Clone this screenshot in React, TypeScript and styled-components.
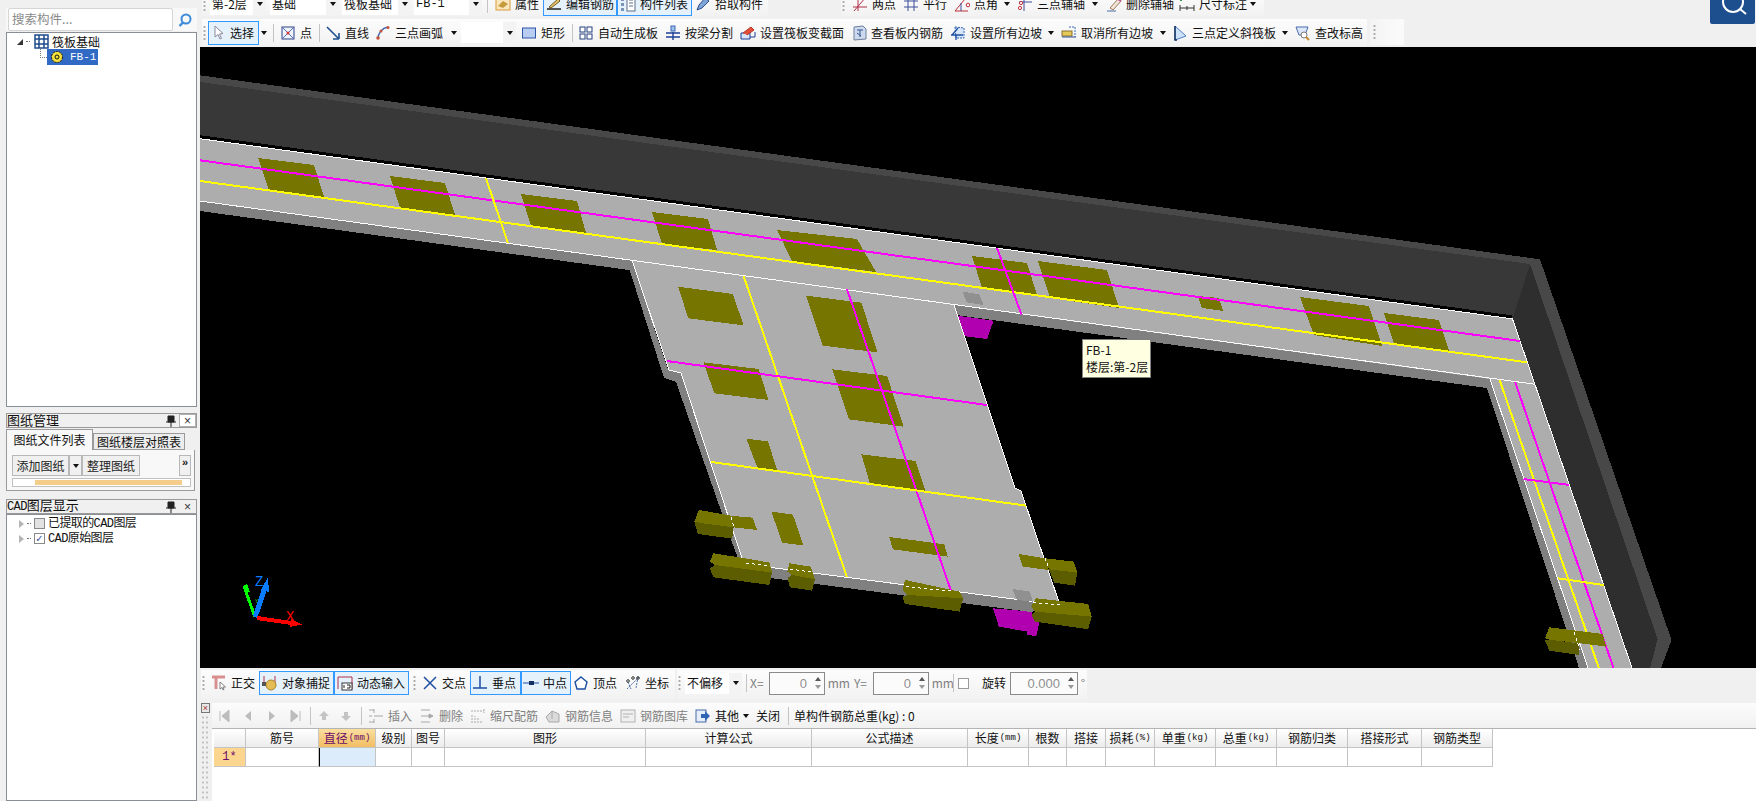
import React from 'react'
import styled, { createGlobalStyle } from 'styled-components'

const GlobalStyle = createGlobalStyle`
  html, body {
    margin: 0;
    padding: 0;
    background: #f0f0f0;
  }
  body {
    font: 12px/16px "Noto Sans CJK SC", "Liberation Sans", sans-serif;
    color: #111;
    overflow: hidden;
  }
`

const icons = {
  select: <path d="M5 1v11l3-2.500 2 4.500 1.500-.7-2-4.300 3.500-.5z" fill="#fff" stroke="#8a8a9a" />,
  point: (
    <>
      <rect x="2" y="2" width="12" height="12" fill="#eef2fb" stroke="#2b3f86" />
      <path d="M3 3l10 10M13 3L3 13" stroke="#5a6db0" />
      <circle cx="8" cy="8" r="1.500" fill="#d33" />
    </>
  ),
  line: <path d="M2 2l11 11M14 14V8M14 14H8" fill="none" stroke="#1f4f8f" strokeWidth="1.600" />,
  arc: (
    <>
      <path d="M3 14C3 8 7 3 13 2" fill="none" stroke="#3c66b0" strokeWidth="1.500" />
      <circle cx="3" cy="13" r="1.800" fill="#c8523a" />
      <circle cx="6" cy="6" r="1.500" fill="#c8523a" />
      <circle cx="13" cy="2.500" r="1.500" fill="#c8523a" />
    </>
  ),
  rect: <rect x="1.500" y="3" width="13" height="10" fill="#b9cdf2" stroke="#2f55a8" />,
  auto: (
    <>
      <rect x="2" y="2" width="5" height="5" fill="#fff" stroke="#24407f" />
      <rect x="9" y="2" width="5" height="5" fill="#fff" stroke="#24407f" />
      <rect x="2" y="9" width="5" height="5" fill="#fff" stroke="#24407f" />
      <rect x="9" y="9" width="5" height="5" fill="#fff" stroke="#24407f" />
    </>
  ),
  split: (
    <>
      <rect x="6" y="1" width="4" height="5" fill="#9ec2ee" stroke="#3c66b0" />
      <path d="M1 8h14M1 12h14M8 7v8" stroke="#1d3f96" strokeWidth="1.400" />
    </>
  ),
  section: (
    <>
      <path d="M1 14V8h9v6z" fill="#d9e6f8" stroke="#1d3f96" />
      <path d="M3 8l8-6 3 3-7 5" fill="#e0503c" stroke="#b9341f" />
      <path d="M15 7v5h-5" fill="none" stroke="#1d3f96" />
    </>
  ),
  inspect: (
    <>
      <path d="M3 2l9-1 3 3v10l-12 1z" fill="#cdd9ee" stroke="#6f7f9e" />
      <path d="M6 5h6M9 5v7M6 8l4 3" stroke="#33578f" />
    </>
  ),
  slope: (
    <>
      <path d="M5 2l9 1v10H6z" fill="#d8e6fa" stroke="#2f65b5" strokeDasharray="2 1" />
      <path d="M2 10l6-7M1 10h12M6 10v5" stroke="#1d4fa3" strokeWidth="1.300" />
    </>
  ),
  unslope: (
    <>
      <path d="M8 2h6v10" fill="none" stroke="#3a6cb8" strokeDasharray="2 1" />
      <rect x="1" y="6" width="10" height="5" fill="#e6c95a" stroke="#85702a" />
      <path d="M1 12h14" stroke="#2f4f8f" />
    </>
  ),
  incline: (
    <>
      <path d="M3 1v14l11-4z" fill="#cfe2fb" stroke="#4c7fc4" />
      <path d="M3 1v14h2" stroke="#14305e" strokeWidth="1.500" fill="none" />
    </>
  ),
  elevation: (
    <>
      <path d="M1 2h12l-3 8H4z" fill="#dce8fa" stroke="#4a6bab" />
      <circle cx="9" cy="10" r="3" fill="#fff" stroke="#777" />
      <path d="M11 12l3 3" stroke="#c88a2c" strokeWidth="2" />
    </>
  ),
  props: (
    <>
      <rect x="1" y="2" width="14" height="12" fill="#fbe7bd" stroke="#d99b3a" />
      <path d="M3 10l5-5 5 3-5 4z" fill="#c69a3a" />
    </>
  ),
  edit: (
    <>
      <path d="M1 13h14" stroke="#111" strokeWidth="1.400" />
      <path d="M3 11l9-8 2 2-9 7z" fill="#e8c56a" stroke="#6e5a20" />
    </>
  ),
  list: (
    <>
      <rect x="1" y="2" width="3" height="3" fill="#7a93b8" />
      <rect x="1" y="7" width="3" height="3" fill="#7a93b8" />
      <rect x="1" y="12" width="3" height="3" fill="#7a93b8" />
      <rect x="7" y="1" width="8" height="14" fill="#fff" stroke="#5e6f8e" />
      <path d="M9 4h4M9 7h4M9 10h4" stroke="#5e6f8e" />
    </>
  ),
  pick: <path d="M2 14l2-5 6-7 4 3-7 7zM12 1l3 3" fill="#7ea4d8" stroke="#2b4f8f" />,
  twoPoint: <path d="M2 15L14 1M6 3v12M1 11h14" fill="none" stroke="#b03048" />,
  parallel: <path d="M1 5h14M1 11h14M5 1v14M11 1v14" stroke="#3f4e9a" />,
  angle: (
    <>
      <path d="M1 15L11 3M1 15h13" stroke="#c22f3c" fill="none" />
      <path d="M7 15v-8" stroke="#3f4e9a" />
      <circle cx="14" cy="9" r="1.800" fill="none" stroke="#c22f3c" />
    </>
  ),
  threeAxis: (
    <>
      <path d="M7 1v14M2 6h13" stroke="#3f4e9a" />
      <circle cx="3" cy="12" r="1.600" fill="#fff" stroke="#c22f3c" />
      <circle cx="4" cy="7" r="1.600" fill="#fff" stroke="#c22f3c" />
    </>
  ),
  erase: (
    <>
      <path d="M1 15h9" stroke="#4a6ca8" />
      <path d="M4 12l8-9 3 2-8 9z" fill="#f0e6d8" stroke="#9a7a5a" />
      <path d="M12 3l3 2" stroke="#c04fa0" strokeWidth="2" />
    </>
  ),
  dimension: (
    <>
      <path d="M1 12h14M1 9v6M15 9v6M8 10v4" stroke="#333" />
      <rect x="1" y="3" width="2" height="2" fill="#2b9a3c" />
    </>
  ),
  ortho: (
    <>
      <path d="M1 2h13M5 2v12" stroke="#d98f8f" strokeWidth="3" />
      <path d="M9 7v7l2-1.500 1 2.500 1-.6-1-2.400h2.500z" fill="#fff" stroke="#666" strokeWidth=".8" />
    </>
  ),
  snap: (
    <>
      <path d="M2 1v8M13 1v8" stroke="#b03048" />
      <circle cx="9" cy="10" r="5" fill="#e4bd55" stroke="#a98526" />
      <rect x="0" y="7" width="4" height="4" fill="#555" />
    </>
  ),
  input: (
    <>
      <path d="M1 2h14M1 2v12M15 2v12" stroke="#b03048" />
      <rect x="5" y="8" width="10" height="7" fill="#fff" stroke="#333" />
      <path d="M7 10v3M10 10h3v3h-3" stroke="#222" fill="none" />
    </>
  ),
  cross: <path d="M2 2l12 12M14 2L2 14" stroke="#1d4fa3" strokeWidth="1.500" />,
  perp: <path d="M1 13h14M8 1v12" stroke="#1d4fa3" strokeWidth="1.500" />,
  mid: (
    <>
      <path d="M0 8h16" stroke="#1d4fa3" />
      <rect x="6" y="6" width="5" height="4" fill="#14305e" />
    </>
  ),
  vertex: <path d="M8 2l6 5-2 7H4L2 7z" fill="#fff" stroke="#1d4fa3" strokeWidth="1.400" />,
  coord: (
    <>
      <path d="M2 14L14 2M3 7l3 7M13 2l-2 11" stroke="#4a6ca8" strokeDasharray="2 1" />
      <circle cx="3" cy="6" r="1.300" fill="none" stroke="#333" />
      <circle cx="13" cy="3" r="1.300" fill="none" stroke="#333" />
      <circle cx="8" cy="3" r="1.300" fill="none" stroke="#333" />
    </>
  ),
  insert: <path d="M1 2h5M1 14h5M1 8h3M6 8h9M6 1v4M6 11v4" stroke="#a8a8a8" />,
  remove: <path d="M2 2h9M2 14h9M2 8h8M10 6l4 2-4 2z" stroke="#a8a8a8" fill="#a8a8a8" />,
  scale: <path d="M2 15V6M5 15V8M8 15v-5M11 15v-3M1 3h13M14 1v4" stroke="#aaa" strokeDasharray="2 1" />,
  info: <path d="M1 9l6-6 7 3v8H4zM7 3v8" fill="#dadada" stroke="#a8a8a8" />,
  library: (
    <>
      <rect x="1" y="2" width="14" height="12" fill="#efefef" stroke="#b2b2b2" />
      <path d="M3 6h10M3 9h6" stroke="#b2b2b2" />
    </>
  ),
  other: (
    <>
      <rect x="1" y="2" width="10" height="12" fill="#e6eefb" stroke="#4a6ca8" />
      <path d="M6 6h4V3l5 5-5 5v-3H6z" fill="#2f65b5" />
    </>
  ),
  first: <path d="M4 3v10M13 2L6 8l7 6z" fill="#bcbcbc" stroke="#bcbcbc" />,
  prev: <path d="M11 3L5 8l6 5z" fill="#bcbcbc" />,
  next: <path d="M5 3l6 5-6 5z" fill="#bcbcbc" />,
  last: <path d="M12 3v10M3 2l7 6-7 6z" fill="#bcbcbc" stroke="#bcbcbc" />,
  up: <path d="M8 3l5 5h-3v4H6V8H3z" fill="#c4c4c4" />,
  down: <path d="M8 13l5-5h-3V4H6v4H3z" fill="#c4c4c4" />,
  raft: (
    <>
      <rect x="2" y="1" width="13" height="13" fill="#fff" stroke="#1e4c8c" strokeWidth="1.500" />
      <path d="M2 5h13M2 10h13M6 1v13M11 1v13" stroke="#1e4c8c" strokeWidth="1.500" />
    </>
  ),
  gear: (
    <>
      <circle cx="8" cy="8" r="5.500" fill="#f4e23a" stroke="#111" strokeDasharray="2 1" />
      <circle cx="8" cy="8" r="2" fill="#f4e23a" stroke="#111" />
    </>
  ),
}

type IconName = keyof typeof icons

const Glyph = styled.svg`
  flex: none;
  width: 16px;
  height: 16px;
`

const Lens = styled.svg`
  flex: none;
  width: 45px;
  height: 24px;
`

const Icon = ({ name }: { name: IconName }) => <Glyph viewBox="0 0 16 16">{icons[name]}</Glyph>

const ToolBox = styled.div<{ $w?: number; $on?: boolean; $off?: boolean; $pad?: number }>`
  flex: none;
  box-sizing: border-box;
  height: 24px;
  width: ${(p) => (p.$w ? `${p.$w}px` : 'auto')};
  display: flex;
  align-items: center;
  gap: 4px;
  padding-left: ${(p) => p.$pad ?? 2}px;
  white-space: nowrap;
  color: ${(p) => (p.$off ? '#808080' : '#111')};
  background: ${(p) => (p.$on ? '#e5f1fb' : 'transparent')};
  box-shadow: ${(p) => (p.$on ? 'inset 0 0 0 1px #3399ff' : 'none')};
`

type ToolProps = {
  w?: number
  icon?: IconName
  on?: boolean
  off?: boolean
  pad?: number
  children?: React.ReactNode
}

const Tool = ({ w, icon, on, off, pad, children }: ToolProps) => (
  <ToolBox $w={w} $on={on} $off={off} $pad={pad}>
    {icon && <Icon name={icon} />}
    {children}
  </ToolBox>
)

const Toolbar = styled.div<{ $w: number; $ml?: number }>`
  flex: none;
  box-sizing: border-box;
  width: ${(p) => p.$w}px;
  margin-left: ${(p) => p.$ml ?? 0}px;
  display: flex;
  align-items: center;
  background: linear-gradient(to bottom, #fcfcfc, #f2f2f2);
`

const Grip = styled.div<{ $w?: number }>`
  flex: none;
  width: ${(p) => p.$w ?? 6}px;
  height: 16px;
  background-image: radial-gradient(circle, #a8a8a8 1px, transparent 1.200px);
  background-size: 3px 4px;
  background-repeat: repeat-y;
  background-position: 1px 0;
`

const Sep = styled.div<{ $w: number }>`
  flex: none;
  width: ${(p) => p.$w}px;
  height: 18px;
  display: flex;
  justify-content: center;
  &::after {
    content: '';
    width: 1px;
    background: #c4c4c4;
  }
`

const Drop = styled.div<{ $w?: number; $mr?: number }>`
  flex: none;
  width: ${(p) => p.$w ?? 10}px;
  margin-right: ${(p) => p.$mr ?? 0}px;
  display: flex;
  justify-content: center;
  &::after {
    content: '';
    border: 3px solid transparent;
    border-top: 4px solid #111;
    border-bottom: 0;
  }
`

const ComboBox = styled.div<{ $w: number; $ml?: number; $mono?: boolean }>`
  flex: none;
  box-sizing: border-box;
  width: ${(p) => p.$w}px;
  height: 21px;
  margin-left: ${(p) => p.$ml ?? 0}px;
  display: flex;
  align-items: center;
  justify-content: space-between;
  padding-left: 2px;
  background: #fff;
  overflow: hidden;
  white-space: nowrap;
  font-family: ${(p) => (p.$mono ? '"Liberation Mono", monospace' : 'inherit')};
`

const ComboArrow = styled(Drop)`
  align-self: stretch;
  align-items: center;
  width: 13px;
  background: #f3f3f3;
`

const Combo = ({ w, ml, mono, children }: { w: number; ml?: number; mono?: boolean; children?: string }) => (
  <ComboBox $w={w} $ml={ml} $mono={mono}>
    <span>{children}</span>
    <ComboArrow />
  </ComboBox>
)

const Page = styled.div`
  width: 1756px;
  height: 801px;
  display: flex;
  overflow: hidden;
`

const LeftColumn = styled.aside`
  flex: none;
  box-sizing: border-box;
  width: 200px;
  height: 801px;
  padding: 8px 3px 0 6px;
  display: flex;
  flex-direction: column;
`

const SearchRow = styled.div`
  flex: none;
  height: 23px;
  margin-bottom: 1px;
  display: flex;
  align-items: stretch;
  background: #f8f8f8;
`

const SearchInput = styled.div`
  flex: none;
  box-sizing: border-box;
  width: 165px;
  margin-left: 2px;
  padding: 2px 3px;
  background: #fff;
  border: 1px solid #d5d5d5;
  border-radius: 2px;
  color: #8a8a8a;
  font-size: 12.500px;
`

const SearchIcon = styled.div`
  flex: 1;
  display: flex;
  align-items: center;
  justify-content: center;
`

const TreeBox = styled.div<{ $h?: number }>`
  box-sizing: border-box;
  flex: ${(p) => (p.$h ? 'none' : '1')};
  height: ${(p) => (p.$h ? `${p.$h}px` : 'auto')};
  background: #fff;
  border: 1px solid #8a8f96;
  padding: 1px 0 0 0;
`

const TreeRow = styled.div<{ $indent: number; $tall?: boolean }>`
  height: ${(p) => (p.$tall ? 16 : 15)}px;
  margin-left: ${(p) => p.$indent}px;
  display: flex;
  align-items: center;
  gap: 3px;
  white-space: nowrap;
`

const Twist = styled.span<{ $open?: boolean }>`
  flex: none;
  width: 0;
  height: 0;
  border-style: solid;
  border-width: ${(p) => (p.$open ? '0 0 6px 6px' : '4px 0 4px 5px')};
  border-color: ${(p) => (p.$open ? 'transparent transparent #333 transparent' : 'transparent transparent transparent #b4b4b4')};
`

const Dots = styled.span<{ $w: number }>`
  flex: none;
  width: ${(p) => p.$w}px;
  border-top: 1px dotted #777;
`

const Elbow = styled.span`
  flex: none;
  box-sizing: border-box;
  width: 7px;
  height: 9px;
  align-self: flex-start;
  border-left: 1px dotted #777;
  border-bottom: 1px dotted #777;
  margin-right: -3px;
`

const Selected = styled.div`
  width: 51px;
  height: 16px;
  display: flex;
  align-items: center;
  gap: 5px;
  padding-left: 2px;
  box-sizing: border-box;
  background: #316ac5;
  color: #fff;
  font: 11px "Liberation Mono", monospace;
`

const DockTitle = styled.div<{ $mt: number }>`
  flex: none;
  box-sizing: border-box;
  height: 15px;
  margin-top: ${(p) => p.$mt}px;
  display: flex;
  align-items: center;
  border: 1px solid #9a9a9a;
  font-size: 13px;
  line-height: 12px;
  background: #f0f0f0;
`

const DockName = styled.span`
  flex: 1;
  white-space: nowrap;
  padding-bottom: 2px;
`

const DockBtn = styled.span<{ $boxed?: boolean }>`
  flex: none;
  width: 17px;
  height: 13px;
  display: flex;
  align-items: center;
  justify-content: center;
  font: 12px "Liberation Sans", sans-serif;
  color: #333;
  background: ${(p) => (p.$boxed ? '#fff' : 'transparent')};
  box-shadow: ${(p) => (p.$boxed ? 'inset 0 0 0 1px #b0b0b0' : 'none')};
`

const TabRow = styled.div`
  flex: none;
  height: 21px;
  display: flex;
  align-items: flex-end;
  margin-top: 1px;
`

const Tab = styled.div<{ $on?: boolean; $w: number }>`
  flex: none;
  box-sizing: border-box;
  width: ${(p) => p.$w}px;
  height: ${(p) => (p.$on ? 21 : 17)}px;
  border: 1px solid #9a9a9a;
  border-bottom: ${(p) => (p.$on ? '0' : '1px solid #9a9a9a')};
  background: ${(p) => (p.$on ? '#f8f8f8' : '#ececec')};
  text-align: center;
  line-height: ${(p) => (p.$on ? 20 : 15)}px;
  white-space: nowrap;
`

const TabBody = styled.div`
  flex: none;
  box-sizing: border-box;
  width: 189px;
  height: 41px;
  padding: 5px 3px 0 5px;
  border: 1px solid #9a9a9a;
  border-top: 0;
  background: #f8f8f8;
`

const DockBtns = styled.div`
  display: flex;
  height: 21px;
`

const FlatBtn = styled.div<{ $w: number }>`
  flex: none;
  box-sizing: border-box;
  width: ${(p) => p.$w}px;
  border: 1px solid #b8b8b8;
  background: #f0f0f0;
  display: flex;
  align-items: center;
  justify-content: center;
  white-space: nowrap;
  color: #222;
`

const More = styled(FlatBtn)`
  margin-left: auto;
  align-items: flex-start;
  font: bold 11px/12px "Liberation Sans", sans-serif;
`

const Progress = styled.div`
  box-sizing: border-box;
  height: 9px;
  margin-top: 2px;
  padding: 1px 8px 1px 22px;
  border: 1px solid #c0c0c0;
  background: #fff;
  &::after {
    content: '';
    display: block;
    height: 5px;
    background: #f5cd8a;
  }
`

const CadLabel = styled.span`
  font-family: "Liberation Mono", "Noto Sans CJK SC", monospace;
  font-size: 12px;
  letter-spacing: -0.6px;
`

const Check = styled.span<{ $on?: boolean }>`
  flex: none;
  box-sizing: border-box;
  width: 11px;
  height: 11px;
  border: 1px solid #8a8a8a;
  background: ${(p) => (p.$on ? '#fff' : '#e2e2e2')};
  color: #3a4fa0;
  font: bold 10px/9px "DejaVu Sans", sans-serif;
  text-align: center;
`

const MainColumn = styled.main`
  flex: 1;
  min-width: 0;
  display: flex;
  flex-direction: column;
  height: 801px;
`

const Header = styled.header`
  flex: none;
  display: flex;
  height: 47px;
`

const HeaderBars = styled.div`
  flex: 1;
  min-width: 0;
`

const ClippedRow = styled.div`
  height: 16px;
  margin-bottom: 3px;
  display: flex;
  align-items: flex-end;
  overflow: hidden;
`

const OpenRow = styled.div`
  display: flex;
  align-items: flex-start;
`

const WideBar = styled(Toolbar)`
  height: 27px;
`

const GhostBar = styled.div`
  flex: none;
  width: 32px;
  height: 26px;
  margin-left: 3px;
  display: flex;
  align-items: center;
  padding-left: 2px;
  background: linear-gradient(to right, #f4f4f4, #fbfbfb);
`

const SearchButton = styled.div`
  flex: none;
  width: 45px;
  height: 24px;
  margin-right: 1px;
  border-radius: 0 0 2px 2px;
  background: #1d4f8e;
  overflow: hidden;
`

const Viewport = styled.div`
  flex: none;
  height: 621px;
  position: relative;
  background: #000;
  overflow: hidden;
`

const Scene = styled.svg`
  display: block;
  width: 1556px;
  height: 621px;
`

const Hint = styled.div`
  position: absolute;
  left: 882px;
  top: 292px;
  box-sizing: border-box;
  width: 69px;
  height: 39px;
  padding: 1px 3px;
  border: 1px solid #808080;
  background: #ffffe1;
  font-size: 12px;
  line-height: 17px;
  white-space: nowrap;
`

const SnapRow = styled.div`
  flex: none;
  height: 35px;
  padding-top: 2px;
  box-sizing: border-box;
  display: flex;
  align-items: flex-start;
`

const SnapBar = styled(Toolbar)`
  height: 29px;
  padding-bottom: 3px;
  box-sizing: border-box;
`

const Plain = styled.span<{ $w: number; $c?: string }>`
  flex: none;
  width: ${(p) => p.$w}px;
  color: ${(p) => p.$c ?? '#808080'};
  white-space: nowrap;
`

const SpinBox = styled.div<{ $w: number }>`
  flex: none;
  box-sizing: border-box;
  width: ${(p) => p.$w}px;
  height: 23px;
  display: flex;
  align-items: center;
  justify-content: flex-end;
  border: 1px solid #8a8a8a;
  background: #fbfbfb;
  color: #909090;
  font: 13px "Liberation Sans", sans-serif;
`

const Spin = styled.span`
  flex: none;
  width: 12px;
  margin-left: 5px;
  height: 100%;
  display: flex;
  flex-direction: column;
  align-items: center;
  justify-content: space-around;
  padding: 3px 0;
  box-sizing: border-box;
  &::before {
    content: '';
    border: 3px solid transparent;
    border-bottom: 4px solid #555;
    border-top: 0;
  }
  &::after {
    content: '';
    border: 3px solid transparent;
    border-top: 4px solid #999;
    border-bottom: 0;
  }
`

const Square = styled.span`
  flex: none;
  box-sizing: border-box;
  width: 11px;
  height: 11px;
  border: 1px solid #9a9a9a;
  background: #fff;
`

const GridDock = styled.section`
  flex: 1;
  min-height: 0;
  display: flex;
`

const DockRail = styled.div`
  flex: none;
  width: 12px;
  padding: 0 2px 0 1px;
  box-sizing: border-box;
  display: flex;
  flex-direction: column;
`

const RailClose = styled.div`
  flex: none;
  box-sizing: border-box;
  width: 9px;
  height: 10px;
  border: 1px solid #777;
  background: #e8e8e8;
  font: 9px/8px "Liberation Sans", sans-serif;
  text-align: center;
  color: #a33;
`

const RailDots = styled.div`
  flex: 1;
  margin-top: 2px;
  background-image: radial-gradient(circle, #c0c0c0 1px, transparent 1.200px);
  background-size: 4px 5px;
`

const GridWrap = styled.div`
  flex: 1;
  min-width: 0;
  display: flex;
  flex-direction: column;
`

const GridBar = styled.div`
  flex: none;
  height: 25px;
  display: flex;
  align-items: center;
  background: linear-gradient(to bottom, #fcfcfc, #f1f1f1);
`

const TableWrap = styled.div`
  flex: 1;
  background: #fff;
  border-top: 1px solid #b4b4b4;
  padding-left: 2px;
`

const Table = styled.div`
  display: grid;
  width: 1279px;
  grid-template-columns: 32px 73px 57px 36px 33px 201px 166px 156px 61px 38px 39px 49px 61px 61px 71px 74px 71px;
  grid-auto-rows: 19px;
`

const HeadCell = styled.div<{ $on?: boolean }>`
  box-sizing: border-box;
  display: flex;
  align-items: center;
  justify-content: center;
  border-right: 1px solid #c4c4c4;
  border-bottom: 1px solid #c4c4c4;
  white-space: nowrap;
  background: ${(p) => (p.$on ? 'linear-gradient(#fadf9f, #f2bd63)' : 'linear-gradient(#fff, #ececec)')};
  color: ${(p) => (p.$on ? '#6a0a6a' : '#111')};
`

const Unit = styled.small`
  font: 9px "Liberation Mono", monospace;
  margin-left: 1px;
`

const RowHead = styled(HeadCell)`
  background: #fcd68f;
  color: #6a0a6a;
  font: 12px "Liberation Mono", monospace;
`

const Cell = styled.div<{ $on?: boolean }>`
  box-sizing: border-box;
  border-right: 1px solid #c4c4c4;
  border-bottom: 1px solid #c4c4c4;
  background: ${(p) => (p.$on ? '#ddecfb' : '#fff')};
  border-left: ${(p) => (p.$on ? '1px solid #000' : '0')};
`

const AxisLetter = styled.text<{ $small?: boolean }>`
  font: ${(p) => (p.$small ? 5 : 14)}px "Liberation Mono", monospace;
`

const columns: [string, string?][] = [
  ['筋号'],
  ['直径', '(mm)'],
  ['级别'],
  ['图号'],
  ['图形'],
  ['计算公式'],
  ['公式描述'],
  ['长度', '(mm)'],
  ['根数'],
  ['搭接'],
  ['损耗', '(%)'],
  ['单重', '(kg)'],
  ['总重', '(kg)'],
  ['钢筋归类'],
  ['搭接形式'],
  ['钢筋类型'],
]

const olive = '#757500'
const oliveDark = '#5c5c00'

// coordinates read off the 3x crops, so each group keeps the crop's own scale
const plateCrop = 'translate(640 250) scale(0.3571 0.3333)'
const legCrop = 'translate(1180 200) scale(0.3674 0.3333)'

const beamPads = [
  '258,158 314,165 324,197 269,190',
  '390,176 445,183 455,215 400,208',
  '521,194 577,201 586,233 531,226',
  '652,212 708,219 717,250 662,244',
  '777,230 857,239 876,272 792,261',
  '972,256 1027,263 1037,295 982,288',
  '1038,261 1107,270 1119,308 1050,298',
  '1198,296 1219,298 1223,311 1202,308',
  '1300,297 1369,306 1382,346 1314,335',
  '1384,313 1439,320 1449,351 1394,344',
]

const platePads = [
  '107,110 260,132 290,226 135,205',
  '465,137 620,158 665,307 512,287',
  '178,337 332,357 360,450 208,430',
  '538,358 692,378 738,530 585,508',
  '298,566 358,574 386,665 330,657',
  '620,613 772,633 800,725 645,705',
  '368,785 428,794 458,887 398,878',
  '698,861 852,883 862,920 708,898',
  '250,797 315,803 328,840 262,832',
  '1060,912 1135,925 1145,960 1072,950',
]

const plateBoxes = [
  { top: '165,780 255,797 262,832 175,820 152,815', low: '175,820 262,832 258,866 162,852 152,815' },
  { top: '205,910 295,925 362,938 370,968 210,945 196,935', low: '210,945 370,968 362,1005 205,982 196,955' },
  { top: '418,940 478,950 490,988 425,975 413,965', low: '425,975 490,988 482,1022 420,1012 413,985' },
  { top: '742,990 895,1025 905,1045 748,1035 735,1020', low: '748,1035 905,1045 895,1085 742,1062 735,1040' },
  { top: '1135,925 1215,935 1225,968 1145,958', low: '1145,958 1225,968 1218,1007 1160,998' },
  { top: '1108,1045 1255,1062 1265,1100 1105,1085 1096,1070', low: '1105,1085 1265,1100 1255,1138 1105,1115 1096,1095' },
]

const StructureScene = () => (
  <Scene viewBox="200 47 1556 621" shapeRendering="crispEdges">
    <polygon points="200,82 1530,264 1512.5,319 200,138.700" fill="#383838" />
    <polygon points="200,75.300 1540,259.300 1530,264 200,82" fill="#484848" />
    <polygon points="1530,264 1657.600,639.300 1650,668 1632,668 1512.500,319" fill="#2e2e2e" />
    <polygon points="1540,259.300 1671.500,640 1661,668 1650,668 1657.600,639.300 1530,264" fill="#484848" />
    <line x1="200" y1="136.700" x2="1512" y2="316.900" stroke="#000" strokeWidth="3" />

    <g transform={plateCrop}>
      <polygon points="888,197 990,212 972,267 905,258" fill="#b000b0" />
      <polygon points="988,1075 1095,1085 1118,1120 1110,1158 1085,1155 1085,1145 1005,1130" fill="#b000b0" />
    </g>

    <polygon points="200,201 1490,378 1487,388 200,211" fill="#808080" />
    <polygon points="1490,379 1588,668 1579,668 1487,388" fill="#808080" />
    <polygon
      points="632,260 629,268 664,378 676,382 733,545 743,572 770,578 1031,612 1060,605 744,564 681,373 668,370"
      fill="#808080"
    />

    <polygon points="200,138.700 1512.500,318.900 1632,668 1588,668 1490,379 200,201" fill="#adadad" />
    <polygon points="632,260 954,305 1015,488 1021,491 1060,605 744,564 681,373 669,370" fill="#adadad" />

    <g fill="none" stroke="#fff" strokeWidth="1">
      <polyline points="200,138.700 1512.500,318.900 1632,668" />
      <line x1="200" y1="201" x2="1534.500" y2="384.200" />
      <line x1="1490" y1="379" x2="1588" y2="668" />
      <polyline points="632,260 669,370 681,373 744,564 1060,605 1021,491 1015,488 954,305" />
    </g>

    {beamPads.map((p) => (
      <polygon key={p} points={p} fill={olive} />
    ))}
    <g transform={plateCrop}>
      {platePads.map((p) => (
        <polygon key={p} points={p} fill={olive} />
      ))}
      <polygon points="903,125 950,133 962,165 915,157" fill="#909090" />
      <polygon points="1043,1017 1092,1025 1100,1055 1055,1050" fill="#909090" />
    </g>

    <g fill="none" strokeWidth="2">
      <line x1="200" y1="160.300" x2="1520" y2="341" stroke="#ff00ff" />
      <line x1="200" y1="181" x2="1527" y2="362.300" stroke="#ffff00" />
      <line x1="486" y1="178.300" x2="508" y2="243.300" stroke="#ffff00" />
      <line x1="997" y1="248" x2="1021.400" y2="314.300" stroke="#ff00ff" />
      <line x1="743.600" y1="276" x2="847" y2="577.300" stroke="#ffff00" />
      <line x1="847" y1="289.300" x2="950.700" y2="590" stroke="#ff00ff" />
      <line x1="666.800" y1="361" x2="987" y2="405" stroke="#ff00ff" />
      <line x1="711.400" y1="462" x2="1026.400" y2="505.700" stroke="#ffff00" />
      <line x1="1499.600" y1="380" x2="1598.800" y2="668" stroke="#ffff00" />
      <line x1="1515" y1="381.700" x2="1613.500" y2="668" stroke="#ff00ff" />
      <line x1="1523.500" y1="479" x2="1569.400" y2="485" stroke="#ff00ff" />
      <line x1="1557.700" y1="578.300" x2="1603.600" y2="585" stroke="#ffff00" />
    </g>

    <g transform={plateCrop}>
      {plateBoxes.map((b) => (
        <g key={b.top}>
          <polygon points={b.low} fill={oliveDark} />
          <polygon points={b.top} fill={olive} />
        </g>
      ))}
    </g>
    <g transform={legCrop}>
      <polygon points="1010,1320 1085,1330 1085,1365 1005,1352 993,1320" fill={oliveDark} />
      <polygon points="1005,1282 1085,1293 1090,1330 1010,1320 993,1315" fill={olive} />
      <polygon points="1085,1293 1150,1302 1160,1340 1090,1330" fill={olive} />
    </g>
    <g stroke="#fff" strokeWidth="1" strokeDasharray="3 3">
      <line x1="746" y1="563" x2="769" y2="566" />
      <line x1="790" y1="569" x2="811" y2="572" />
      <line x1="906" y1="586.700" x2="951" y2="591" />
      <line x1="1033" y1="602.700" x2="1061" y2="605" />
      <line x1="731" y1="517" x2="734" y2="527" />
      <line x1="1045" y1="558" x2="1049" y2="569" />
      <line x1="1574" y1="632" x2="1580" y2="650" />
    </g>

    <g fill="none">
      <line x1="255" y1="617" x2="246" y2="592" stroke="#00ff00" strokeWidth="3" />
      <polygon points="244,592 250,592 247,584 243,586" fill="#00ff00" />
      <line x1="255" y1="617" x2="265" y2="588" stroke="#0a7cff" strokeWidth="5" />
      <polygon points="261,590 269,592 268,577" fill="#0a7cff" />
      <line x1="257" y1="618" x2="291" y2="623" stroke="#ff0000" strokeWidth="4" />
      <polygon points="291,619 302,624.500 290,627" fill="#ff0000" />
    </g>
    <AxisLetter x="255" y="586" fill="#0a7cff">Z</AxisLetter>
    <AxisLetter x="286" y="621" fill="#ff0000">X</AxisLetter>
    <AxisLetter x="255" y="603" fill="#00cc00" $small>Y</AxisLetter>
  </Scene>
)

function PinIcon() {
  return (
    <Glyph viewBox="0 0 16 16">
      <path d="M5 3h6v6H5zM3 9h10M8 9v5" fill="#222" stroke="#222" />
    </Glyph>
  )
}

export default function App() {
  return (
    <Page>
      <GlobalStyle />
      <LeftColumn>
        <SearchRow>
          <SearchInput>搜索构件...</SearchInput>
          <SearchIcon>
            <Glyph viewBox="0 0 16 16">
              <circle cx="9" cy="7" r="4.500" fill="none" stroke="#3c8bd9" strokeWidth="2" />
              <path d="M6 10.500L2.500 14" stroke="#3c8bd9" strokeWidth="2.400" />
            </Glyph>
          </SearchIcon>
        </SearchRow>
        <TreeBox $h={375}>
          <TreeRow $indent={10}>
            <Twist $open />
            <Dots $w={4} />
            <Icon name="raft" />
            <span>筏板基础</span>
          </TreeRow>
          <TreeRow $indent={33} $tall>
            <Elbow />
            <Selected>
              <Icon name="gear" />
              FB-1
            </Selected>
          </TreeRow>
        </TreeBox>

        <DockTitle $mt={6}>
          <DockName>图纸管理</DockName>
          <DockBtn>
            <PinIcon />
          </DockBtn>
          <DockBtn $boxed>×</DockBtn>
        </DockTitle>
        <TabRow>
          <Tab $on $w={87}>图纸文件列表</Tab>
          <Tab $w={92}>图纸楼层对照表</Tab>
        </TabRow>
        <TabBody>
          <DockBtns>
            <FlatBtn $w={57}>添加图纸</FlatBtn>
            <FlatBtn $w={13}>
              <Drop />
            </FlatBtn>
            <FlatBtn $w={58}>整理图纸</FlatBtn>
            <More $w={12}>»</More>
          </DockBtns>
          <Progress />
        </TabBody>

        <DockTitle $mt={8}>
          <DockName>
            <CadLabel>CAD</CadLabel>图层显示
          </DockName>
          <DockBtn>
            <PinIcon />
          </DockBtn>
          <DockBtn>×</DockBtn>
        </DockTitle>
        <TreeBox>
          <TreeRow $indent={12}>
            <Twist />
            <Dots $w={4} />
            <Check />
            <CadLabel>已提取的CAD图层</CadLabel>
          </TreeRow>
          <TreeRow $indent={12}>
            <Twist />
            <Dots $w={4} />
            <Check $on>✓</Check>
            <CadLabel>CAD原始图层</CadLabel>
          </TreeRow>
        </TreeBox>
      </LeftColumn>

      <MainColumn>
        <Header>
          <HeaderBars>
            <ClippedRow>
              <Toolbar $w={566} $ml={2}>
                <Grip $w={8} />
                <Combo w={56}>第-2层</Combo>
                <Combo w={69} ml={4}>基础</Combo>
                <Combo w={69} ml={3}>筏板基础</Combo>
                <Combo w={68} ml={3} mono>FB-1</Combo>
                <Sep $w={11} />
                <Tool w={50} icon="props">属性</Tool>
                <Tool w={74} icon="edit" on pad={3}>编辑钢筋</Tool>
                <Tool w={75} icon="list" on pad={3}>构件列表</Tool>
                <Tool w={75} icon="pick" pad={3}>拾取构件</Tool>
              </Toolbar>
              <Toolbar $w={423} $ml={73}>
                <Grip $w={9} />
                <Tool w={51} icon="twoPoint">两点</Tool>
                <Tool w={51} icon="parallel">平行</Tool>
                <Tool w={50} icon="angle">点角</Tool>
                <Drop $mr={3} />
                <Tool w={75} icon="threeAxis">三点辅轴</Tool>
                <Drop $w={9} $mr={2} />
                <Tool w={76} icon="erase" pad={5}>删除辅轴</Tool>
                <Tool w={71} icon="dimension">尺寸标注</Tool>
                <Drop />
              </Toolbar>
            </ClippedRow>
            <OpenRow>
              <WideBar $w={1165} $ml={2}>
                <Grip />
                <Tool w={51} icon="select" on>选择</Tool>
                <Drop />
                <Sep $w={9} />
                <Tool w={38} icon="point">点</Tool>
                <Sep $w={7} />
                <Tool w={50} icon="line">直线</Tool>
                <Tool w={76} icon="arc">三点画弧</Tool>
                <Drop $w={9} $mr={3} />
                <Combo w={55} />
                <Tool w={53} icon="rect" pad={5}>矩形</Tool>
                <Sep $w={7} />
                <Tool w={87} icon="auto">自动生成板</Tool>
                <Tool w={75} icon="split">按梁分割</Tool>
                <Tool w={111} icon="section">设置筏板变截面</Tool>
                <Tool w={99} icon="inspect">查看板内钢筋</Tool>
                <Tool w={98} icon="slope">设置所有边坡</Tool>
                <Drop $mr={3} />
                <Tool w={99} icon="unslope">取消所有边坡</Tool>
                <Drop $w={9} $mr={3} />
                <Tool w={110} icon="incline">三点定义斜筏板</Tool>
                <Drop $mr={3} />
                <Tool w={71} icon="elevation">查改标高</Tool>
              </WideBar>
              <GhostBar>
                <Grip />
              </GhostBar>
            </OpenRow>
          </HeaderBars>
          <SearchButton>
            <Lens viewBox="0 0 45 24">
              <circle cx="23" cy="2" r="10" fill="none" stroke="#fff" strokeWidth="2" />
              <path d="M30 9l6 5" stroke="#fff" strokeWidth="2" />
            </Lens>
          </SearchButton>
        </Header>

        <Viewport>
          <StructureScene />
          <Hint>
            FB-1
            <br />
            楼层:第-2层
          </Hint>
        </Viewport>

        <SnapRow>
          <SnapBar $w={211} $ml={1}>
            <Grip $w={8} />
            <Tool w={50} icon="ortho">正交</Tool>
            <Tool w={75} icon="snap" on pad={3}>对象捕捉</Tool>
            <Tool w={75} icon="input" on pad={3}>动态输入</Tool>
          </SnapBar>
          <SnapBar $w={263}>
            <Grip $w={8} />
            <Tool w={50} icon="cross">交点</Tool>
            <Tool w={51} icon="perp" on>垂点</Tool>
            <Tool w={50} icon="mid" on>中点</Tool>
            <Tool w={52} icon="vertex">顶点</Tool>
            <Tool w={50} icon="coord">坐标</Tool>
          </SnapBar>
          <SnapBar $w={410} $ml={2}>
            <Grip $w={8} />
            <Combo w={57}>不偏移</Combo>
            <Sep $w={8} />
            <Plain $w={19}>X=</Plain>
            <SpinBox $w={56}>
              0<Spin />
            </SpinBox>
            <Plain $w={29}>&nbsp;mm</Plain>
            <Plain $w={19}>Y=</Plain>
            <SpinBox $w={56}>
              0<Spin />
            </SpinBox>
            <Plain $w={20}>&nbsp;mm</Plain>
            <Sep $w={9} />
            <Square />
            <Plain $w={13} />
            <Plain $w={28} $c="#111">旋转</Plain>
            <SpinBox $w={68}>
              0.000
              <Spin />
            </SpinBox>
            <Plain $w={10}>&nbsp;°</Plain>
          </SnapBar>
        </SnapRow>

        <GridDock>
          <DockRail>
            <RailClose>×</RailClose>
            <RailDots />
          </DockRail>
          <GridWrap>
            <GridBar>
              <Tool w={24} icon="first" pad={4} />
              <Tool w={24} icon="prev" pad={4} />
              <Tool w={24} icon="next" pad={4} />
              <Tool w={24} icon="last" pad={4} />
              <Sep $w={5} />
              <Tool w={22} icon="up" pad={3} />
              <Tool w={22} icon="down" pad={3} />
              <Sep $w={9} />
              <Tool w={51} icon="insert" off>插入</Tool>
              <Tool w={51} icon="remove" off>删除</Tool>
              <Tool w={75} icon="scale" off>缩尺配筋</Tool>
              <Tool w={75} icon="info" off>钢筋信息</Tool>
              <Tool w={75} icon="library" off>钢筋图库</Tool>
              <Tool w={48} icon="other">其他</Tool>
              <Drop $w={9} $mr={6} />
              <Plain $w={27} $c="#111">关闭</Plain>
              <Sep $w={11} />
              <Plain $w={130} $c="#111">单构件钢筋总重(kg) : 0</Plain>
            </GridBar>
            <TableWrap>
              <Table>
                <HeadCell />
                {columns.map(([name, unit], i) => (
                  <HeadCell key={name} $on={i === 1}>
                    {name}
                    {unit && <Unit>{unit}</Unit>}
                  </HeadCell>
                ))}
                <RowHead>1*</RowHead>
                {columns.map(([name], i) => (
                  <Cell key={name} $on={i === 1} />
                ))}
              </Table>
            </TableWrap>
          </GridWrap>
        </GridDock>
      </MainColumn>
    </Page>
  )
}
